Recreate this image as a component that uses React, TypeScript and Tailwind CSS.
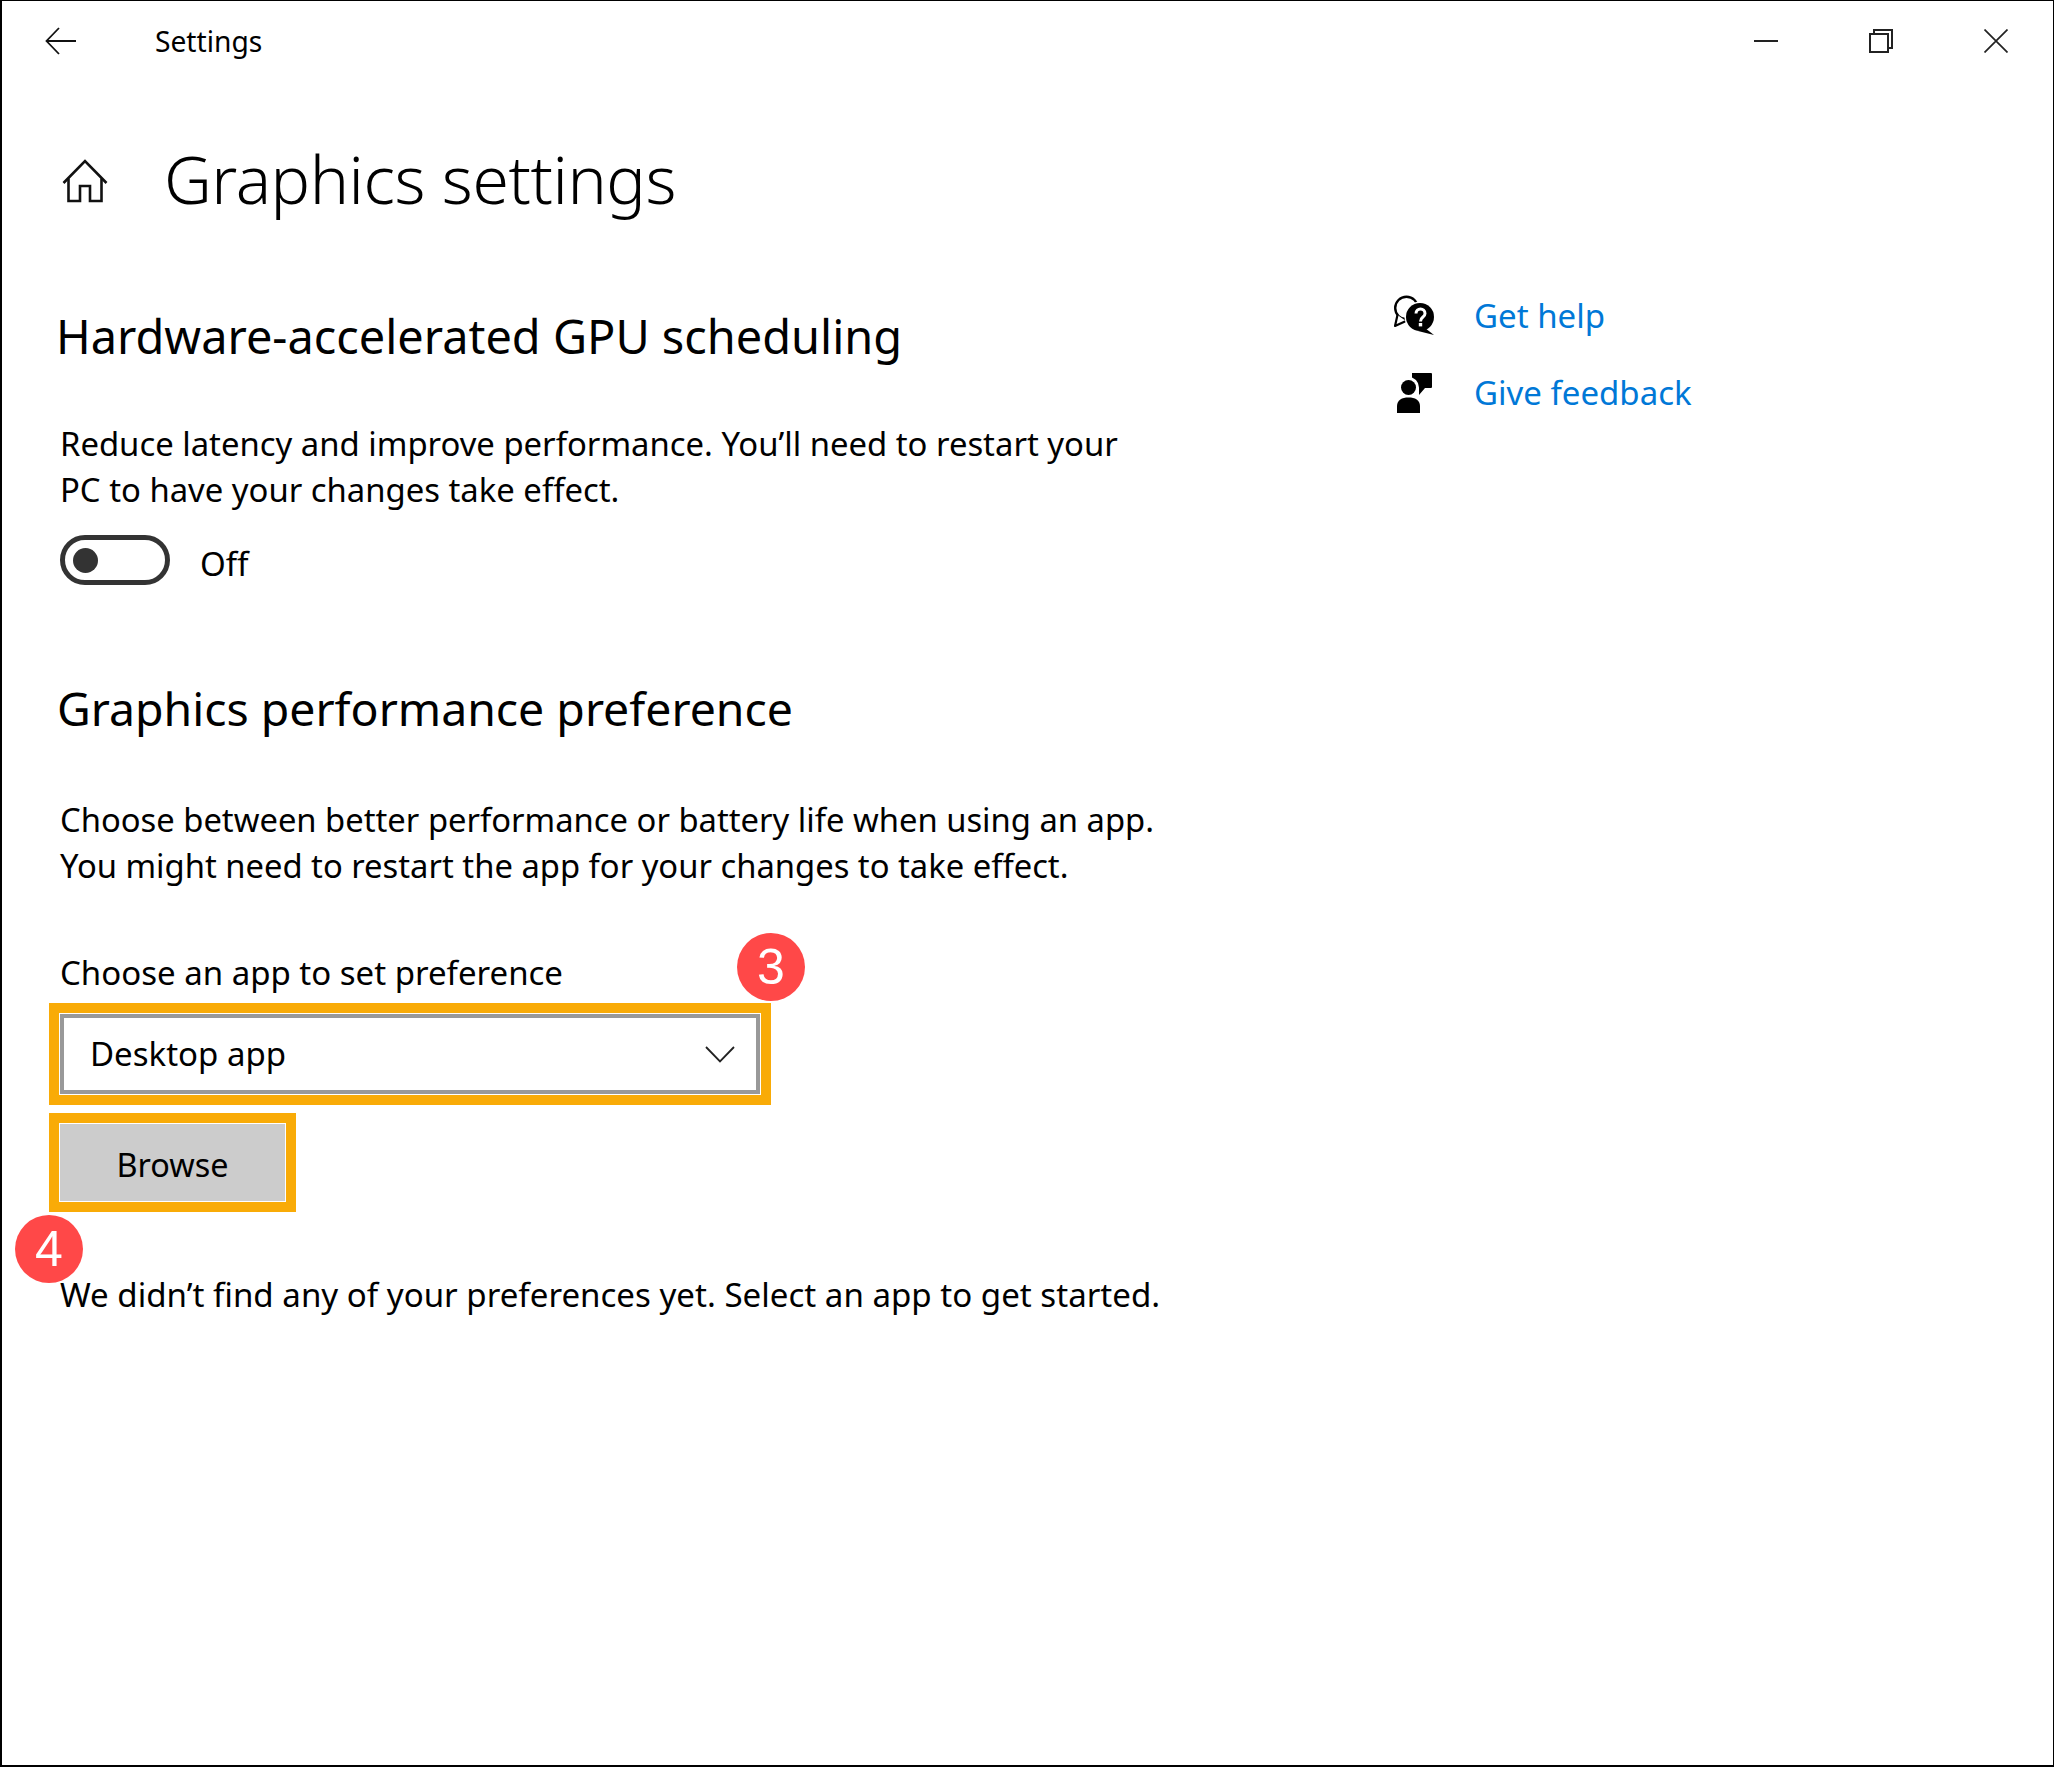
const FONT = "font-['Noto_Sans','Open_Sans',sans-serif]";

function Badge(props: { n: string; className: string }) {
  return (
    <span
      className={`absolute flex h-[68px] w-[68px] items-center justify-center rounded-full bg-[#ff4848] text-[50px] leading-none text-white font-['Liberation_Sans',sans-serif] ${props.className}`}
    >
      {props.n}
    </span>
  );
}

function HelpIcon() {
  return (
    <svg width="42" height="42" viewBox="0 0 42 42" className="shrink-0">
      <circle cx="12.5" cy="13" r="11.3" fill="white" stroke="black" strokeWidth="2.4" />
      <path d="M3.5 20 L1 31 L12 26" fill="white" stroke="black" strokeWidth="2.2" strokeLinejoin="round" />
      <circle cx="26" cy="22" r="15.5" fill="white" />
      <circle cx="26" cy="22" r="14" fill="black" />
      <path d="M31 33 L40 40 L24 36 Z" fill="black" />
      <path d="M22 18.5 C22 12.5 31 12.5 31 18.5 C31 22.5 26.5 21.5 26.5 26.5" fill="none" stroke="white" strokeWidth="3" />
      <rect x="24.8" y="28" width="3.4" height="3.4" fill="white" />
    </svg>
  );
}

function FeedbackIcon() {
  return (
    <svg width="42" height="42" viewBox="0 0 42 42" className="shrink-0">
      <path d="M18 1 H37 Q38 1 38 2 V15 Q38 16 37 16 H31 L25 23 V16 H18 Z" fill="black" />
      <circle cx="14.5" cy="15.5" r="10.5" fill="white" />
      <circle cx="14.5" cy="15.5" r="7.5" fill="black" />
      <path d="M3 41 V34 C3 28 8 25.5 14.5 25.5 C21 25.5 26 28 26 34 V41 Z" fill="black" />
    </svg>
  );
}

export default function App() {
  return (
    <div className="h-[1768px] w-[2055px] pr-px pb-px">
      <div className={`h-full w-full overflow-hidden border-t border-r border-b-2 border-l-2 border-black bg-white text-black ${FONT}`}>
        {/* title bar */}
        <div className="flex h-[80px] items-center">
          <svg width="32" height="28" viewBox="0 0 32 28" className="ml-[43px] shrink-0" fill="none" stroke="#111" strokeWidth="1.8">
            <path d="M31 14 H1.5 M14 1 L1.5 14 L14 27" />
          </svg>
          <span className="ml-[78px] text-[28.2px]">Settings</span>
          <div className="ml-auto flex items-center gap-[91px] pr-[45px]">
            <svg width="24" height="24" viewBox="0 0 24 24" fill="none" stroke="#222" strokeWidth="2">
              <path d="M0 12 H24" />
            </svg>
            <svg width="24" height="24" viewBox="0 0 24 24" fill="none" stroke="#222" strokeWidth="2">
              <rect x="1" y="5" width="18" height="18" />
              <path d="M5 5 V1 H23 V19 H19" />
            </svg>
            <svg width="24" height="24" viewBox="0 0 24 24" fill="none" stroke="#222" strokeWidth="1.7">
              <path d="M0.5 0.5 L23.5 23.5 M23.5 0.5 L0.5 23.5" />
            </svg>
          </div>
        </div>

        <div className="flex">
          <div className="w-[1392px] shrink-0">
            {/* page heading */}
            <div className="mt-[37px] flex h-[120px] items-center pl-[60px]">
              <svg width="46" height="44" viewBox="0 0 46 44" fill="none" stroke="#111" strokeWidth="2.6" className="mt-[6px] shrink-0">
                <path d="M1.5 24 L23 2 L44.5 24" />
                <path d="M6.5 19.5 V42 H18 V27 H28 V42 H39.5 V19.5" />
              </svg>
              <h1 className="ml-[56px] text-[66px] font-light leading-none tracking-[-0.42px]">Graphics settings</h1>
            </div>

            <h2 className="mt-[66px] pl-[54px] text-[46.9px] leading-[64px]">Hardware-accelerated GPU scheduling</h2>
            <p className="mt-[53px] w-[1200px] pl-[58px] text-[32.85px] leading-[46px]">
              Reduce latency and improve performance. You’ll need to restart your
              <br />
              PC to have your changes take effect.
            </p>
            <div className="mt-[22px] flex h-[50px] items-center pl-[58px]">
              <span className="flex h-[50px] w-[110px] items-center rounded-full border-[5px] border-[#333] pl-[8px]">
                <span className="h-[25px] w-[25px] rounded-full bg-[#333]" />
              </span>
              <span className="ml-[30px] pt-[7px] text-[33px] leading-[50px]">Off</span>
            </div>

            <h2 className="mt-[91px] pl-[55px] text-[46.4px] leading-[64px]">Graphics performance preference</h2>
            <p className="mt-[57px] pl-[58px] text-[32.75px] leading-[46px]">
              Choose between better performance or battery life when using an app.
              <br />
              You might need to restart the app for your changes to take effect.
            </p>

            <div className="relative mt-[61px] pl-[58px] text-[33px] leading-[46px]">
              Choose an app to set preference
              <Badge n="3" className="left-[735px] top-[-17px]" />
            </div>

            <div className="mt-[7px] ml-[47px] flex h-[102px] w-[722px] bg-[#f9ab07] p-[10px]">
              <div className="flex h-full w-full items-center justify-between border border-white">
                <div className="flex h-full w-full items-center justify-between border-[4px] border-[#999] bg-white pl-[26px] pr-[21px] text-[33px]">
                  <span>Desktop app</span>
                  <svg width="30" height="17" viewBox="0 0 30 17" fill="none" stroke="#222" strokeWidth="1.8">
                    <path d="M1 1 L15 15.5 L29 1" />
                  </svg>
                </div>
              </div>
            </div>

            <div className="relative mt-[8px] ml-[47px] h-[99px] w-[247px] bg-[#f9ab07] p-[10px]">
              <div className="flex h-full w-full items-center justify-center border border-white bg-[#cccccc] pt-[3px] text-[32.4px]">
                Browse
              </div>
              <Badge n="4" className="left-[-34px] top-[102px]" />
            </div>

            <p className="mt-[60px] pl-[58px] text-[33.1px] leading-[46px]">
              We didn’t find any of your preferences yet. Select an app to get started.
            </p>
          </div>

          {/* help links */}
          <div className="flex flex-col gap-[35px] pt-[214px] text-[33px] leading-[42px] text-[#0078d7]">
            <div className="flex items-center gap-[38px]">
              <HelpIcon />
              <span>Get help</span>
            </div>
            <div className="flex items-center gap-[38px]">
              <FeedbackIcon />
              <span>Give feedback</span>
            </div>
          </div>
        </div>
      </div>
    </div>
  );
}
